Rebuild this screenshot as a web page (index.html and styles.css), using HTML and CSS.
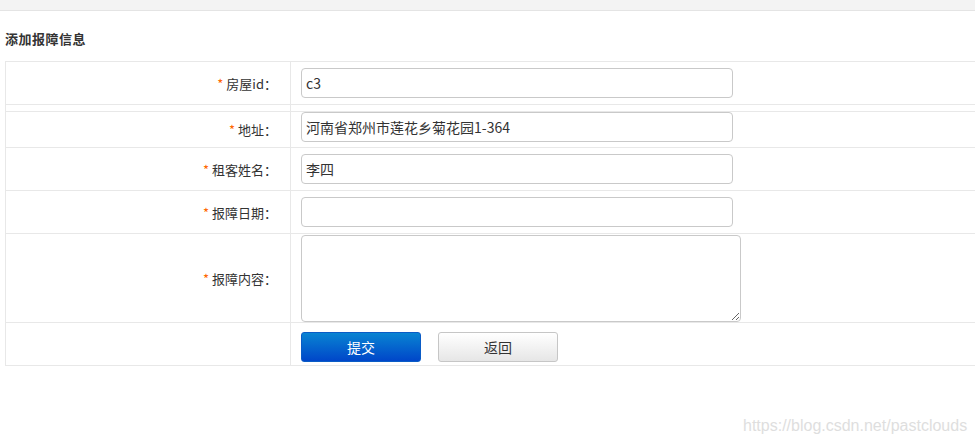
FILE: index.html
```html
<!DOCTYPE html>
<html lang="zh-CN">
<head>
<meta charset="utf-8">
<title>添加报障信息</title>
<link rel="stylesheet" href="styles.css">
</head>
<body>
<div class="topbar"></div>
<h2 class="title">添加报障信息</h2>
<div class="form">
  <div class="row r43">
    <div class="label"><span class="req">*</span>房屋id：</div>
    <div class="field center"><input class="inp" type="text" value="c3"></div>
  </div>
  <div class="row spacer">
    <div class="label"></div>
    <div class="field"></div>
  </div>
  <div class="row r36">
    <div class="label"><span class="req">*</span>地址：</div>
    <div class="field top"><input class="inp" type="text" value="河南省郑州市莲花乡菊花园1-364"></div>
  </div>
  <div class="row r43">
    <div class="label"><span class="req">*</span>租客姓名：</div>
    <div class="field center"><input class="inp" type="text" value="李四"></div>
  </div>
  <div class="row r43">
    <div class="label"><span class="req">*</span>报障日期：</div>
    <div class="field center"><input class="inp" type="text" value=""></div>
  </div>
  <div class="row r89">
    <div class="label"><span class="req">*</span>报障内容：</div>
    <div class="field top1"><textarea class="ta"></textarea></div>
  </div>
  <div class="row r43">
    <div class="label"></div>
    <div class="field buttons">
      <button class="btn primary">提交</button>
      <button class="btn plain">返回</button>
    </div>
  </div>
</div>
<div class="watermark">https://blog.csdn.net/pastclouds</div>
</body>
</html>
```
FILE: styles.css
```css
html, body {
  margin: 0;
  padding: 0;
  background: #fff;
  overflow: hidden;
}
body {
  font-family: "Noto Sans CJK SC", "Noto Sans", sans-serif;
  color: #333;
  width: 975px;
  height: 445px;
  position: relative;
}
.topbar {
  height: 10px;
  background: #f3f3f3;
  border-bottom: 1px solid #e4e4e4;
}
.title {
  margin: 0;
  padding: 0 0 0 5px;
  height: 50px;
  line-height: 56px;
  font-size: 13px;
  font-weight: bold;
  color: #333;
  letter-spacing: 0.5px;
}
.form {
  margin-left: 5px;
  border-top: 1px solid #e8e8e8;
  border-left: 1px solid #e8e8e8;
  width: 1000px;
}
.row {
  display: grid;
  grid-template-columns: 285px 1fr;
  border-bottom: 1px solid #e8e8e8;
  box-sizing: border-box;
}
.r43 { height: 43px; }
.r36 { height: 36px; }
.r89 { height: 89px; }
.spacer { height: 7px; }
.label {
  border-right: 1px solid #e8e8e8;
  display: flex;
  align-items: center;
  justify-content: flex-end;
  padding-right: 13px;
  font-size: 13px;
  color: #333;
}
.req {
  color: #ff6600;
  margin-right: 3px;
  font-size: 13px;
}
.field {
  display: flex;
  padding-left: 10px;
}
.field.center { align-items: center; }
.field.top { align-items: flex-start; }
.field.top1 { align-items: flex-start; padding-top: 1px; }
.inp {
  width: 432px;
  height: 30px;
  box-sizing: border-box;
  border: 1px solid #c9c9c9;
  border-radius: 4px;
  padding: 0 4px;
  font-family: "Noto Sans CJK SC", "Noto Sans", sans-serif;
  font-size: 14px;
  color: #333;
  outline: none;
}
.ta {
  width: 440px;
  height: 87px;
  box-sizing: border-box;
  border: 1px solid #c9c9c9;
  border-radius: 4px;
  padding: 4px;
  font-family: "Noto Sans CJK SC", sans-serif;
  font-size: 14px;
  resize: both;
  margin: 0;
}
.buttons {
  align-items: flex-start;
  padding-top: 9px;
  gap: 17px;
}
.btn {
  width: 120px;
  height: 30px;
  box-sizing: border-box;
  border-radius: 3px;
  font-family: "Noto Sans CJK SC", sans-serif;
  font-size: 14px;
  padding: 0;
  cursor: pointer;
}
.primary {
  color: #fff;
  border: 1px solid #0a5cc6;
  background: linear-gradient(#0984d2, #0046c9);
}
.plain {
  color: #333;
  border: 1px solid #c6c6c6;
  background: linear-gradient(#ffffff, #e6e6e6);
}
.watermark {
  position: absolute;
  left: 743px;
  top: 417px;
  font-family: "Liberation Sans", Arial, sans-serif;
  font-size: 16px;
  color: #dedede;
}
```
